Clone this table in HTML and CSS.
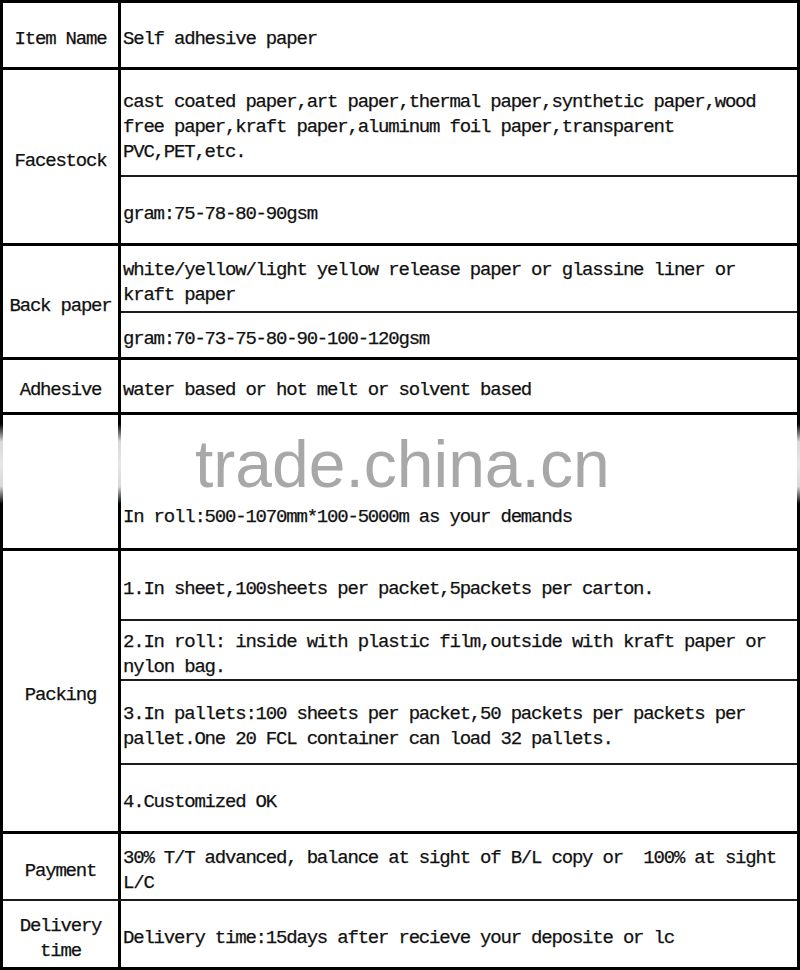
FILE: index.html
```html
<!DOCTYPE html>
<html lang="en">
<head>
<meta charset="utf-8">
<title>Self adhesive paper specification</title>
<link rel="stylesheet" href="styles.css">
</head>
<body>
<div class="sheet">
  <div class="group">
    <div class="label">Item Name</div>
    <div class="values">
      <div class="value h64">Self adhesive paper</div>
    </div>
  </div>
  <div class="group">
    <div class="label">Facestock</div>
    <div class="values">
      <div class="value h107">cast coated paper,art paper,thermal paper,synthetic paper,wood free paper,kraft paper,aluminum foil paper,transparent PVC,PET,etc.</div>
      <div class="value h66">gram:75-78-80-90gsm</div>
    </div>
  </div>
  <div class="group">
    <div class="label">Back paper</div>
    <div class="values">
      <div class="value h67">white/yellow/light yellow release paper or glassine liner or kraft paper</div>
      <div class="value h44">gram:70-73-75-80-90-100-120gsm</div>
    </div>
  </div>
  <div class="group">
    <div class="label">Adhesive</div>
    <div class="values">
      <div class="value h52">water based or hot melt or solvent based</div>
    </div>
  </div>
  <div class="group">
    <div class="label"></div>
    <div class="values">
      <div class="value h133 bottom">In roll:500-1070mm*100-5000m as your demands</div>
    </div>
  </div>
  <div class="group">
    <div class="label">Packing</div>
    <div class="values">
      <div class="value h70">1.In sheet,100sheets per packet,5packets per carton.</div>
      <div class="value h60">2.In roll: inside with plastic film,outside with kraft paper or nylon bag.</div>
      <div class="value h84">3.In pallets:100 sheets per packet,50 packets per packets per pallet.One 20 FCL container can load 32 pallets.</div>
      <div class="value h66">4.Customized OK</div>
    </div>
  </div>
  <div class="group thin">
    <div class="label">Payment</div>
    <div class="values">
      <div class="value h65">30% T/T advanced, balance at sight of B/L copy or&nbsp; 100% at sight L/C</div>
    </div>
  </div>
  <div class="group last">
    <div class="label">Delivery time</div>
    <div class="values">
      <div class="value h66">Delivery time:15days after recieve your deposite or lc</div>
    </div>
  </div>

  <div class="wm-band"></div>
  <div class="watermark">trade.china.cn</div>
</div>
</body>
</html>
```
FILE: styles.css
```css
html, body {
  margin: 0;
  padding: 0;
  background: #fff;
}

.sheet {
  position: relative;
  width: 800px;
  height: 970px;
  box-sizing: border-box;
  border: 3px solid #000;
  display: flex;
  flex-direction: column;
  font-family: "Liberation Mono", "DejaVu Sans Mono", monospace;
  font-size: 19px;
  letter-spacing: -1.2px;
  line-height: 25px;
  color: #111;
  -webkit-text-stroke: 0.25px #111;
}

.group {
  display: grid;
  grid-template-columns: 118px 1fr;
  border-bottom: 3px solid #000;
  flex: none;
}

.group.thin {
  border-bottom: 2px solid #1c1c1c;
}

.group.last {
  border-bottom: none;
}

.label {
  border-right: 3px solid #000;
  display: flex;
  align-items: center;
  justify-content: center;
  text-align: center;
  padding-top: 9px;
}

.values {
  display: flex;
  flex-direction: column;
}

.value {
  display: flex;
  align-items: center;
  padding: 9px 8px 0 2px;
  box-sizing: border-box;
  border-bottom: 2px solid #1c1c1c;
}

.value:last-child {
  border-bottom: none;
}

.value.bottom {
  align-items: flex-end;
  padding-bottom: 18px;
}

.h44 { height: 44px; }
.h52 { height: 52px; }
.h60 { height: 60px; }
.h64 { height: 64px; }
.h65 { height: 65px; }
.h66 { height: 66px; }
.h67 { height: 67px; }
.h70 { height: 70px; }
.h84 { height: 84px; }
.h107 { height: 107px; }
.h133 { height: 133px; }

.wm-band {
  position: absolute;
  left: -3px;
  right: -3px;
  top: 421px;
  height: 80px;
  background: linear-gradient(to bottom,
    rgba(255,255,255,0) 0%,
    rgba(255,255,255,0.85) 22%,
    rgba(255,255,255,0.9) 50%,
    rgba(255,255,255,0.85) 78%,
    rgba(255,255,255,0) 100%);
}

.watermark {
  position: absolute;
  left: 192px;
  top: 428px;
  font-family: "Liberation Sans", Arial, sans-serif;
  font-size: 66px;
  line-height: 66px;
  letter-spacing: 0;
  color: #a8a8a8;
  -webkit-text-stroke: 0;
}
```
